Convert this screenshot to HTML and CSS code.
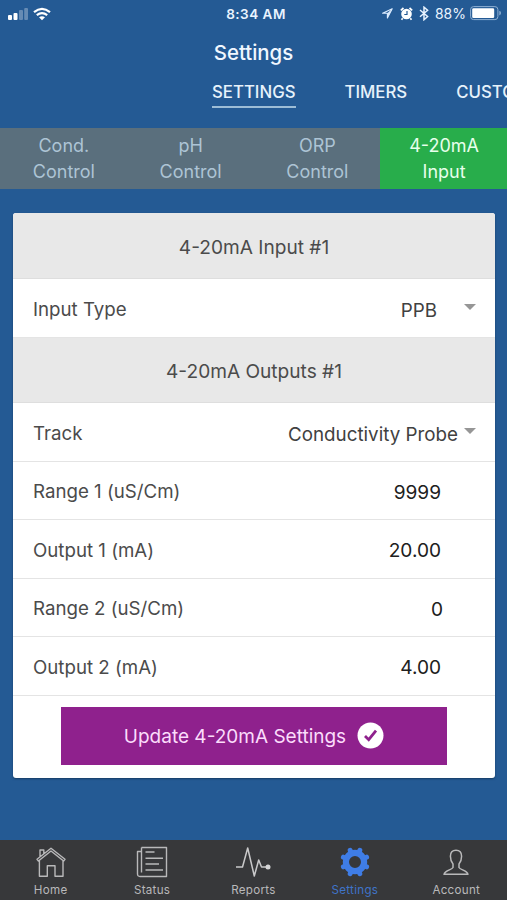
FILE: index.html
```html
<!DOCTYPE html>
<html lang="en">
<head>
<meta charset="utf-8">
<title>Settings</title>
<link rel="stylesheet" href="styles.css">
</head>
<body>
<div class="app">
  <header class="statusbar">
    <div class="status-left">
      <svg width="20" height="14" viewBox="0 0 20 14" fill="#fff"><rect x="0" y="8" width="4" height="5" rx="1"/><rect x="5.5" y="6" width="4" height="7" rx="1"/><rect x="11" y="3" width="4" height="10" rx="1" opacity=".3"/><rect x="16.2" y="1" width="3.8" height="12" rx="1" opacity=".3"/></svg>
      <svg width="18" height="14" viewBox="0 0 18 14" fill="none" stroke="#fff" stroke-width="2.2"><path d="M1 5.2Q9-1.4 17 5.2M3.8 8.2Q9 4 14.2 8.2"/><path d="M6 10.3Q9 8.1 12 10.3L9 13.3Z" fill="#fff" stroke="none"/></svg>
    </div>
    <div class="clock">8:34 AM</div>
    <div class="status-right">
      <svg width="13" height="13" viewBox="0 0 13 13" fill="none" stroke="#dcecff" stroke-width="1.1" stroke-linejoin="round"><path d="M11.2 1.8L1.6 6.3H6.4V11Z"/><path d="M11 1.8L6.4 6.3V11Z" fill="#dcecff" stroke="none"/></svg>
      <svg class="alarm" width="13" height="14" viewBox="0 0 13 14"><circle cx="6.5" cy="7" r="5.3" fill="#fff"/><path d="M.8 3.3L3.5 1M9.5 1L12.2 3.3M2.7 11.3L1.5 12.8M10.3 11.3L11.5 12.8" stroke="#fff" stroke-width="1.7"/><path d="M7 4V7.5H4.3" fill="none" stroke="#245a94" stroke-width="1.2"/></svg>
      <svg class="bluetooth" width="10" height="15" viewBox="0 0 10 15" fill="none" stroke="#e8f3ff" stroke-width="1.5"><path d="M1 4L8.6 10.5 5 13.7V1.2L8.6 4.3 1 10.8"/></svg>
      <span class="percent">88%</span>
      <svg class="battery" width="31" height="15" viewBox="0 0 31 15"><rect x=".6" y=".6" width="27.3" height="13" rx="3" fill="none" stroke="#8fb0d3"/><rect x="2.2" y="2.2" width="22" height="9.8" rx="1.3" fill="#fff"/><path d="M29.3 4.7Q31 5.2 31 7.1T29.3 9.5Z" fill="#8fb0d3"/></svg>
    </div>
  </header>
  <h1 class="title">Settings</h1>
  <nav class="pages">
    <span class="page current">SETTINGS</span>
    <span class="page">TIMERS</span>
    <span class="page">CUSTOM</span>
  </nav>
  <nav class="segments">
    <div class="segment">Cond.<br>Control</div>
    <div class="segment">pH<br>Control</div>
    <div class="segment">ORP<br>Control</div>
    <div class="segment selected">4-20mA<br>Input</div>
  </nav>
  <main class="card">
    <h2 class="section">4-20mA Input #1</h2>
    <div class="row"><span class="label">Input Type</span><span class="value ppb">PPB</span><i class="caret"></i></div>
    <h2 class="section second">4-20mA Outputs #1</h2>
    <div class="row"><span class="label">Track</span><span class="value probe">Conductivity Probe</span><i class="caret"></i></div>
    <div class="row"><span class="label">Range 1 (uS/Cm)</span><span class="number">9999</span></div>
    <div class="row"><span class="label">Output 1 (mA)</span><span class="number">20.00</span></div>
    <div class="row"><span class="label">Range 2 (uS/Cm)</span><span class="number zero">0</span></div>
    <div class="row"><span class="label">Output 2 (mA)</span><span class="number">4.00</span></div>
    <button class="update"><span>Update 4-20mA Settings</span>
      <svg width="27" height="27" viewBox="0 0 27 27"><circle cx="13.5" cy="13.5" r="13" fill="#fff"/><path d="M8 14L11.7 17.7 19 8.7" fill="none" stroke="#8f218d" stroke-width="2.8"/></svg>
    </button>
  </main>
  <footer class="tabbar">
    <div class="tab">
      <svg width="32" height="32" viewBox="0 0 32 32" fill="none" stroke="#b9b9ba" stroke-width="1.4" stroke-linejoin="round"><path d="M2 13.3L16 2.2 30 13.3 28.6 15 16 5 3.4 15ZM5 10.7V4H8.8V7.6M4.4 14.5V30.3H12.3V19.8H20V30.3H28V14.5"/></svg>
      <span>Home</span>
    </div>
    <div class="tab">
      <svg width="32" height="32" viewBox="0 0 32 32" fill="none" stroke="#b9b9ba" stroke-width="1.4" stroke-linejoin="round"><path d="M5.5 1.5H30.5V30.5H4Q1.5 30.5 1.5 28V5.5H5.5M5.5 1.5V26.5M9.5 6H18.5M9.5 12.3H27M9.5 18H23M9.5 24H27"/></svg>
      <span>Status</span>
    </div>
    <div class="tab">
      <svg width="36" height="32" viewBox="0 0 36 32" fill="none" stroke="#c9c9ca" stroke-width="1.5" stroke-linejoin="round"><path d="M1 21H7.5L12.7 2 19.3 30 23.7 14 26.5 21H32"/><circle cx="33" cy="21" r="2.5" fill="#d5d5d6" stroke="none"/></svg>
      <span>Reports</span>
    </div>
    <div class="tab on">
      <svg width="32" height="32" viewBox="0 0 32 32"><g fill="none" stroke="#3f7de6"><circle cx="16" cy="16" r="9.1" stroke-width="6.2"/><path d="M20.2 5.9L20.8 4.4M26.1 11.8L27.6 11.2M26.1 20.2L27.6 20.8M20.2 26.1L20.8 27.6M11.8 26.1L11.2 27.6M5.9 20.2L4.4 20.8M5.9 11.8L4.4 11.2M11.8 5.9L11.2 4.4" stroke-width="5" stroke-linecap="round"/></g></svg>
      <span>Settings</span>
    </div>
    <div class="tab">
      <svg width="28" height="32" viewBox="0 0 28 32" fill="none" stroke="#b9b9ba" stroke-width="1.5" stroke-linejoin="round"><path d="M14 4.2C10.3 4.2 8.4 6.7 8.4 10.2C8.4 13.5 9.3 15.9 11 17.9V21.5C9.8 24 3 24 2 28.3H26C25 24 18.2 24 17 21.5V17.9C18.7 15.9 19.6 13.5 19.6 10.2C19.6 6.7 17.7 4.2 14 4.2Z"/></svg>
      <span>Account</span>
    </div>
  </footer>
</div>
</body>
</html>
```

FILE: styles.css
```css
* { box-sizing: border-box; }
body { margin: 0; font-family: Inter, "Liberation Sans", sans-serif; }
svg { display: block; flex: none; }
.app { width: 507px; height: 900px; overflow: hidden; display: flex; flex-direction: column; background: #245a94; }
.statusbar { height: 27px; flex: none; display: grid; grid-template-columns: 1fr auto 1fr; align-items: center; color: #eaf4ff; font-size: 13.5px; padding: 0 6px 0 8px; }
.status-left { display: flex; gap: 5px; align-items: center; }
.clock { font-weight: 600; letter-spacing: .5px; padding-left: 3px; }
.status-right { display: flex; align-items: center; justify-content: flex-end; }
.alarm { margin-left: 6px; }
.bluetooth { margin-left: 6px; }
.percent { margin: 0 4px 0 6px; font-size: 14px; }
.title { margin: 0; height: 50px; line-height: 51px; text-align: center; font-size: 20.4px; font-weight: 500; color: #f0f7ff; flex: none; }
.pages { display: flex; flex: none; gap: 49px; height: 51px; padding: 5px 0 0 212px; white-space: nowrap; color: #e7f2fb; font-size: 16.8px; font-weight: 500; line-height: 20px; }
.page { height: 26px; flex: none; }
.current { border-bottom: 2px solid #9dbdd6; }
.segments { display: grid; grid-template-columns: repeat(4, 1fr); height: 61px; flex: none; background: #5a6f7d; }
.segment { padding: 5px 0 0 1px; text-align: center; color: #adc4d5; font-size: 18px; line-height: 26px; }
.selected { background: #28ad4b; color: #e7ffec; }
.card { margin: 24px 12px 0 13px; height: 565px; flex: none; border-radius: 3px; background: #fff; overflow: hidden; box-shadow: 0 1px 2px #173c63; color: #4b4b4b; font-size: 18.7px; }
.section { margin: 0; height: 66px; line-height: 69px; background: #e8e8e8; text-align: center; font-size: 19.1px; font-weight: 400; border-bottom: 1px solid #dedede; }
.second { height: 65.5px; line-height: 66px; }
.row { height: 58.5px; display: flex; align-items: center; padding: 3px 19px 0 20px; border-bottom: 1.5px solid #e4e4e4; }
.label { margin-right: auto; }
.value { color: #414141; padding-top: 2px; font-size: 18.8px; }
.ppb { margin-right: 27px; }
.probe { margin-right: 6px; }
.caret { border: 6px solid transparent; border-top-color: #969696; border-bottom: 0; margin-bottom: 4px; }
.number { margin-right: 35px; color: #202020; font-size: 19.1px; }
.zero { margin-right: 33px; }
.update { width: 386px; height: 57.5px; margin: 11.5px 0 0 48px; border: 0; padding: 2px 0 0; background: #8f218d; color: #fbdcfb; display: flex; align-items: center; justify-content: center; gap: 11px; font: 400 19px Inter, "Liberation Sans", sans-serif; }
.update svg { margin-bottom: 3px; }
.tabbar { margin-top: auto; height: 60px; flex: none; display: grid; grid-template-columns: repeat(5, 1fr); background: #37383a; color: #b9b9ba; font-size: 11.6px; }
.tab { padding-top: 6px; display: flex; flex-direction: column; align-items: center; gap: 5px; line-height: 14px; letter-spacing: .3px; }
.on { color: #3f74c8; }
```
